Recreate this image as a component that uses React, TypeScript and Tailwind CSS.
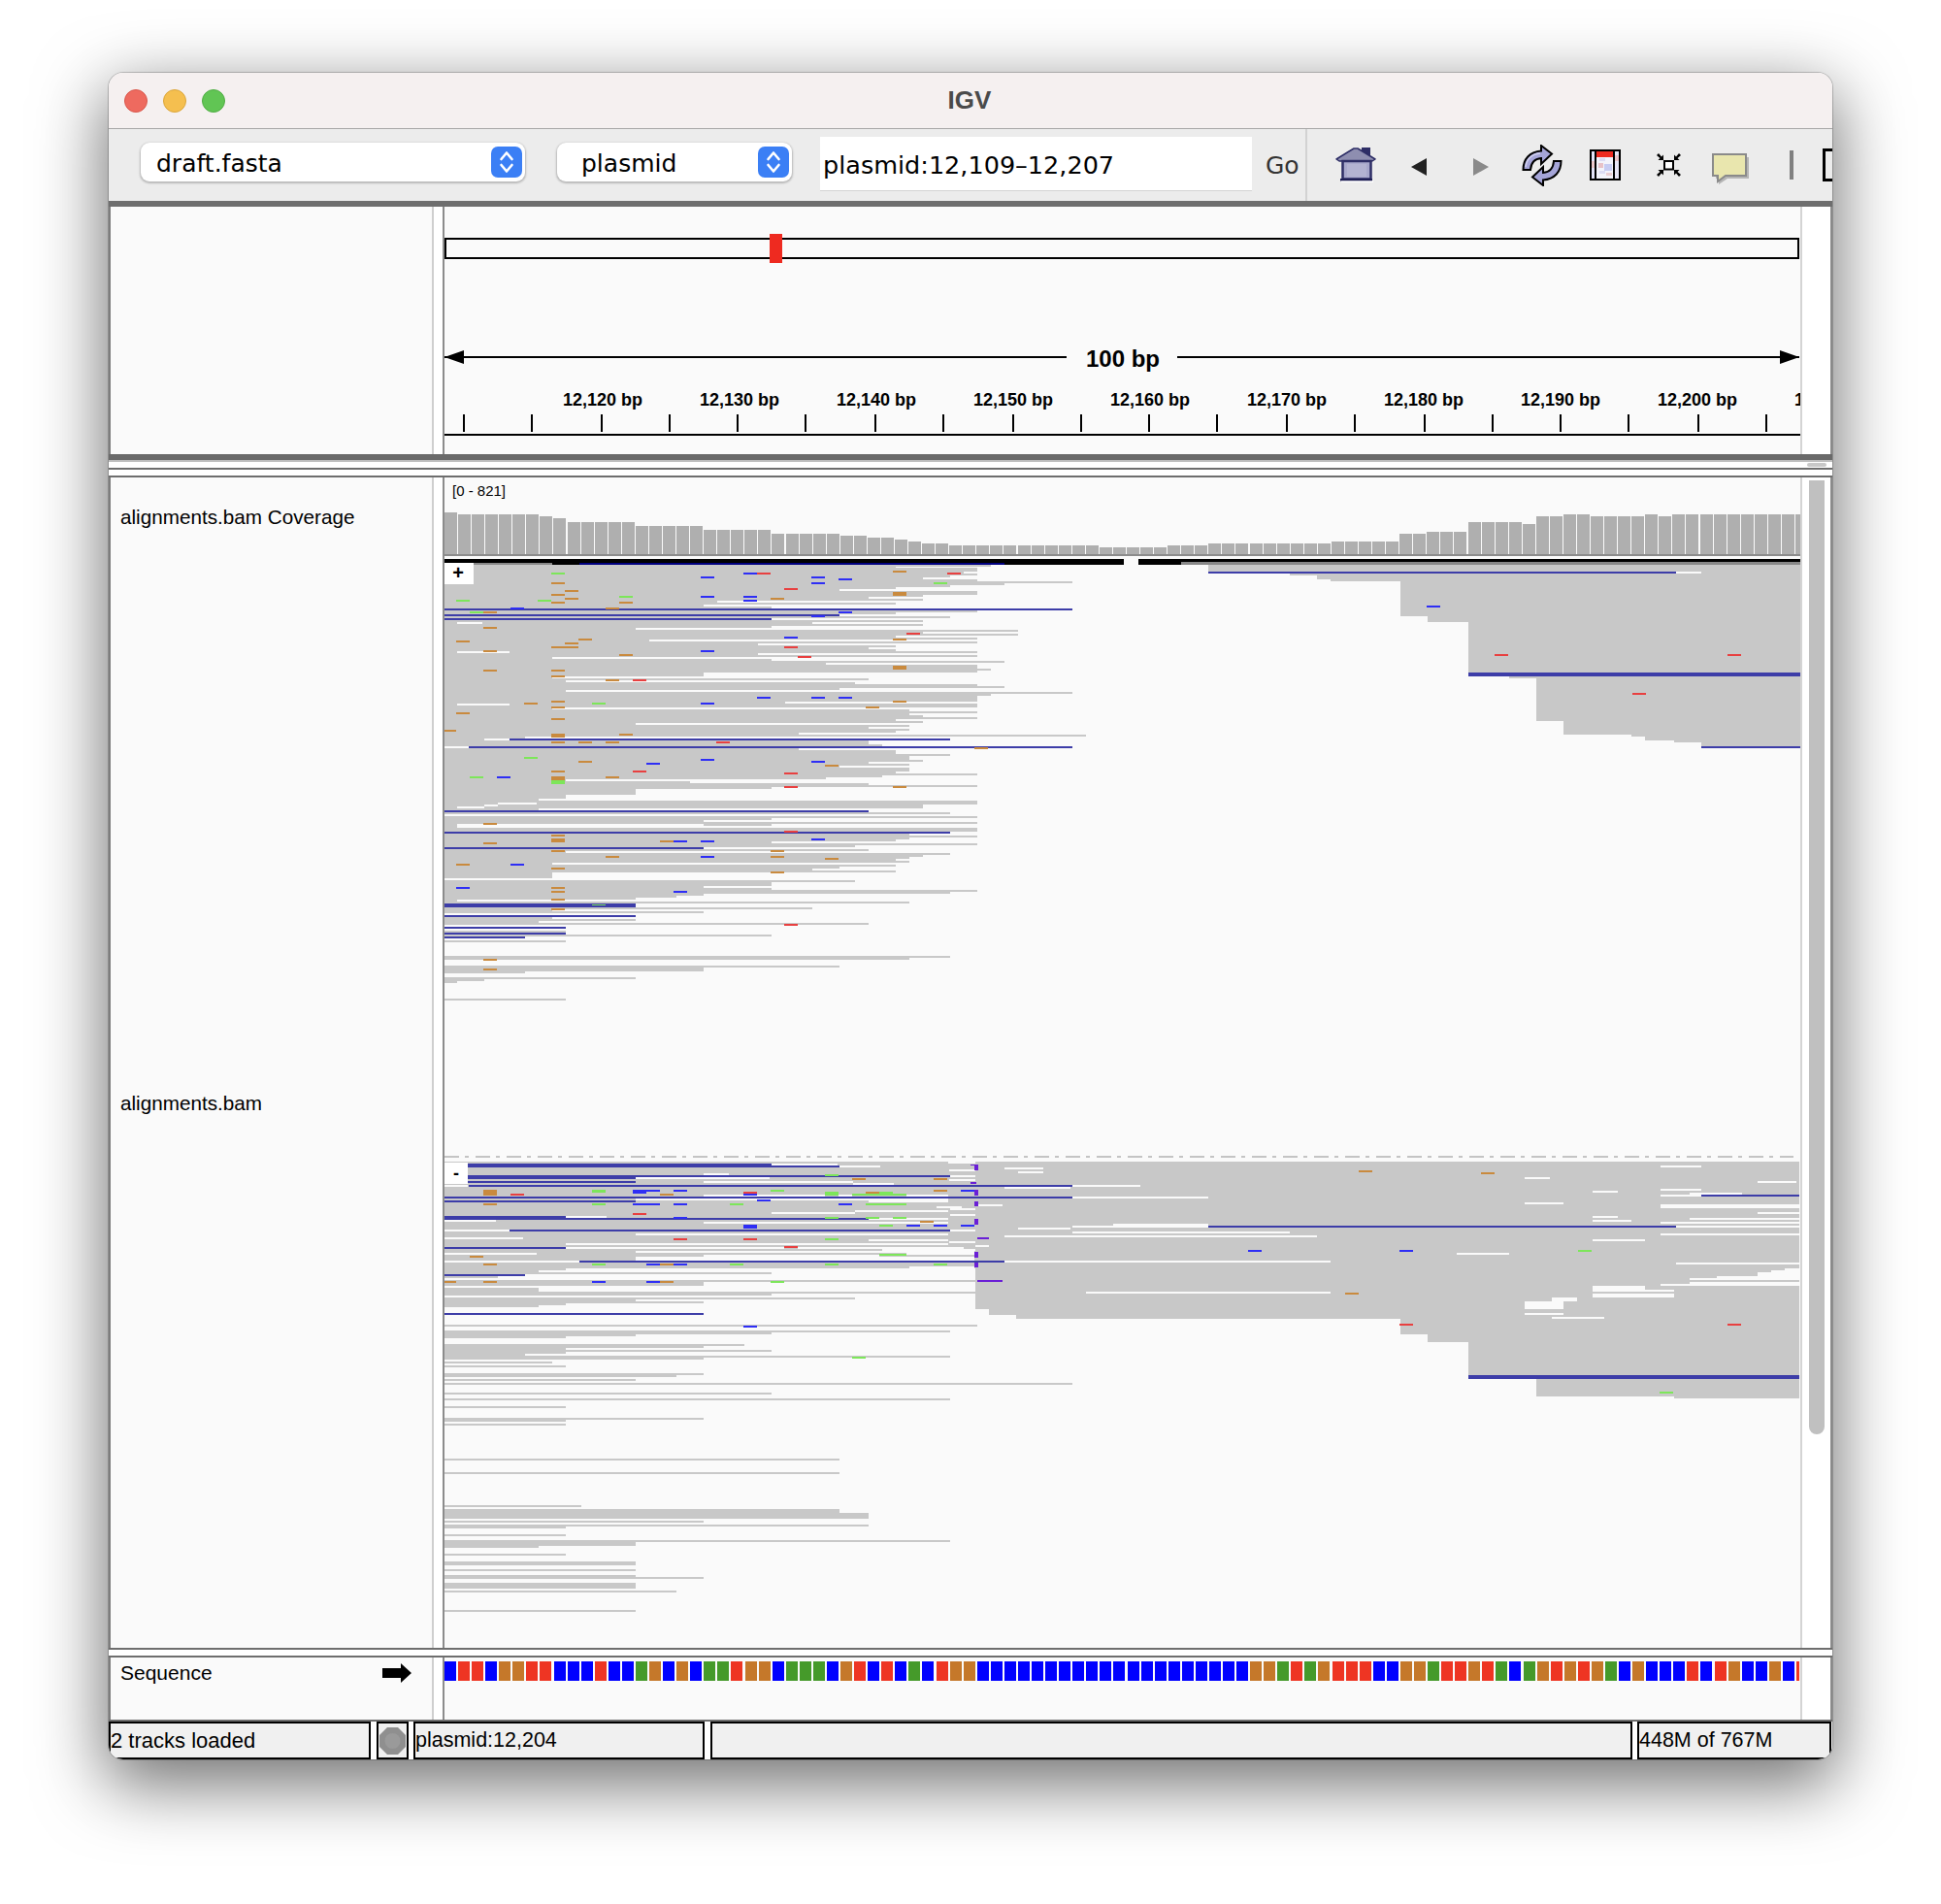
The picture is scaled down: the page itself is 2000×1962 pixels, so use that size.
import React from "react";

const SANS = "font-['Liberation_Sans',Arial,sans-serif]";
const UI = "font-['DejaVu_Sans',sans-serif]";
const GREY = "#c8c8c8", NAVY = "#3d3da8", OR = "#c98a3e", BL = "#2e2ef5", GR = "#7de65a", RD = "#e84040", PU = "#6a1fd6";

type R = { x: number; y: number; w: number; h: number; c: string };
const RIGHT = 1855;
const mk = (fx: (n: number) => number, fy: (n: number) => number) =>
  (x0: number, x1: number, y0: number, y1: number, c: string): R => {
    const x = Math.round(fx(x0)), y = Math.round(fy(y0));
    return { x, y, w: Math.min(Math.round(fx(x1)), RIGHT) - x, h: Math.max(1, Math.round(fy(y1)) - y), c };
  };
const z6 = mk(n => 440 + n / 2.24, n => 570 + n / 3);
const z7 = mk(n => 440 + n / 2.24, n => 1180 + n / 3);
const z8 = mk(n => 1000 + n / 1.742, n => 1180 + n / 3);
const z9 = mk(n => 1200 + n / 2.24, n => 500 + n / 3);

const TOP_ROWS: [number, number][] = [[36,1302],[42,1082],[44,1270],[56,1238],[62,1270],[68,1207],[74,1145],[80,1270],[86,1490],[92,1333],[98,1207],[104,1082],[110,952],[116,1270],[130,1145],[134,1020],[140,1145],[146,670],[152,1082],[158,638],[164,795],[170,638],[176,1270],[182,1082],[188,952],[194,1207],[200,795],[206,1145],[212,889],[218,1145],[224,795],[230,482],[236,1364],[242,1145],[248,1364],[254,1082],[260,1270],[266,513],[272,1270],[278,764],[284,1082],[290,1020],[296,1082],[302,1270],[308,764],[314,1270],[320,289],[326,795],[332,1333],[338,921],[344,1270],[358,1302],[362,1270],[368,638],[380,289],[386,1020],[392,320],[398,988],[404,1270],[412,1333],[416,952],[422,320],[428,1490],[434,1302],[440,1270],[458,827],[464,1270],[476,288],[482,1113],[488,1270],[494,1113],[500,1145],[506,1270],[512,1082],[518,1145],[524,482],[530,1113],[536,1020],[542,1113],[548,1082],[554,858],[560,1521],[566,226],[572,190],[578,1020],[590,1051],[596,96],[602,858],[608,1082],[620,1207],[626,1113],[632,1113],[638,1145],[644,1020],[650,1113],[656,952],[662,1113],[674,1082],[680,1270],[686,1051],[692,921],[698,320],[704,607],[710,1020],[716,1270],[722,795],[728,482],[746,320],[758,258],[764,1270],[776,1145],[788,258],[794,1019],[800,1207],[806,40],[812,1270],[818,795],[824,638],[830,1270],[836,795],[842,69],[848,1270],[860,1207],[866,1113],[872,1270],[878,1113],[884,1082],[890,795],[896,1270],[902,988],[908,638],[914,1020],[920,320],[926,1207],[932,1145],[938,1113],[944,1082],[950,1113],[956,289],[962,1082],[968,952],[974,889],[980,1082],[986,289],[1004,40],[1010,988],[1016,795],[1028,638],[1034,795],[1040,1270],[1046,1207],[1052,638],[1058,576],[1064,482],[1070,69],[1076,1113],[1082,482],[1094,889],[1100,289],[1106,638],[1112,40],[1118,482],[1124,289],[1130,482],[1136,258],[1142,1020],[1148,40],[1154,320],[1160,40],[1166,320],[1172,320],[1178,795],[1184,226],[1190,40],[1196,320],[1202,40],[1245,1207],[1251,1113],[1257,40],[1275,952],[1281,638],[1293,226],[1299,40],[1311,482],[1317,132],[1323,69],[1329,40],[1377,320],[1383,40],[1390,40]];

const BOT_ROWS: [number, number][] = [[381,320],[387,258],[393,795],[399,226],[405,164],[411,40],[417,1266],[423,638],[435,40],[441,258],[453,1266],[459,795],[465,40],[471,988],[477,482],[483,638],[489,320],[495,258],[501,40],[519,638],[525,40],[555,1270],[561,40],[573,1207],[579,795],[585,482],[591,320],[597,40],[615,732],[621,638],[627,320],[633,795],[639,320],[645,226],[651,1207],[657,638],[663,40],[669,289],[675,40],[681,320],[687,40],[705,638],[711,576],[717,40],[723,482],[729,40],[735,1490],[741,40],[765,795],[771,40],[783,1207],[789,40],[807,320],[813,40],[843,638],[849,320],[855,40],[861,320],[867,40],[969,952],[975,40],[1011,952],[1017,40],[1113,356],[1119,40],[1125,952],[1137,1019],[1155,40],[1161,638],[1167,40],[1173,1019],[1179,320],[1185,40],[1203,320],[1209,40],[1221,1207],[1227,482],[1239,258],[1245,40],[1263,320],[1269,40],[1287,482],[1299,40],[1311,482],[1317,40],[1329,482],[1335,638],[1341,40],[1353,482],[1371,40],[1377,576],[1383,40],[1437,482],[1443,40]];

const rows = (list: [number, number][], f: typeof z6) =>
  list.slice(0, -1).map(([y, x], i) => (x > 40 ? f(40, x, y, list[i + 1][0], GREY) : null)).filter(Boolean) as R[];

const W = "#fafafa";
const hole = (f: typeof z6, l: number[][]) => l.map(([a, b, c, d]) => f(a, b, c, d, W));
const band = (f: typeof z6, l: number[][], col: string) => l.map(([a, b, c, d]) => f(a, b, c, d, col));
const marks = (f: typeof z6, l: number[][], col: string, dw = 31) =>
  l.map(([x, y, w = dw, h = 5]) => f(x, x + w, y, y + h, col));

const top6Marks = [
  ...marks(z6, [[287,60],[67,144],[255,144],[444,132],[1169,90],[99,180],[224,630],[381,462],[99,690],[287,702,31,12],[381,1086,31,4]], GR),
  ...marks(z6, [[1075,54],[287,90],[318,114],[287,126],[318,138],[287,150],[444,150],[793,138],[1075,120],[1075,126],[130,180],[130,228],[67,270],[349,264],[318,276],[287,288,62],[1075,264,31,6],[130,300,31,6],[444,312],[130,360],[287,360],[287,378,31,6],[1075,348],[1075,354],[412,390,31,6],[224,462],[287,456],[287,474,31,6],[1075,456],[1012,474,31,6],[67,492],[287,510],[40,546,27],[287,558],[287,564,31,6],[444,558],[287,582],[349,582],[412,582],[1263,600,31,6],[349,642],[918,654],[287,672],[287,690],[287,696],[412,690],[1075,720,31,6],[130,834,31,6],[287,870],[287,882],[287,888],[130,894],[538,888],[287,918],[793,918,31,6],[412,936],[793,936],[918,942],[67,960],[287,972],[793,984,31,6],[287,1032],[287,1044],[287,1068,31,6],[287,1098],[130,1254,31,6],[130,1284],[412,168]], OR),
  ...marks(z6, [[632,72],[730,60],[887,72],[950,78],[887,90],[632,132],[730,132],[730,144,31,6],[193,168],[950,180],[887,192],[824,258],[632,300],[762,444],[887,444],[950,444],[632,462],[632,636],[506,648],[887,642],[161,690],[569,888],[632,888],[887,882],[632,936],[193,960],[67,1032],[569,1044]], BL),
  ...marks(z6, [[762,60],[1201,60],[824,108],[1107,246],[824,288],[856,318,31,6],[475,390,31,6],[668,582],[475,672],[824,678],[824,720,31,6],[824,858],[824,1146,31,6]], RD),
];

const RECTS: R[] = [
  z6(40, 1568, 18, 36, "#000"),
  z6(108, 289, 30, 36, "#888"),
  z6(352, 1333, 30, 36, "#000080"),
  { x: 1140, y: 576, w: 18, h: 6, c: "#000" },
  { x: 1173, y: 576, w: 44, h: 6, c: "#000" },
  { x: 1217, y: 576, w: 638, h: 3, c: "#000" },
  { x: 1217, y: 579, w: 638, h: 3, c: "#888" },
  ...rows(TOP_ROWS, z6),
  ...hole(z6, [[69,128,212,218],[69,190,304,308],[69,190,465,471],[132,190,572,578],[40,96,596,602],[132,164,776,782],[69,132,784,790],[164,253,770,776],[69,638,836,842]]),
  ...band(z6, [[40,1490,170,176],[40,952,188,194],[40,795,200,206],[190,1207,572,578],[96,1490,596,602],[40,1019,794,800],[40,1207,860,866],[40,638,908,914],[40,482,1082,1094],[40,482,1118,1124],[40,320,1154,1160],[40,320,1172,1178],[40,226,1184,1190]], NAVY),
  ...top6Marks,
  ...band(z9, [[101,1469,246,267],[1239,1469,267,273],[289,1469,273,279],[352,1469,279,291],[383,1469,291,297],[544,1469,297,405],[607,1469,405,423],[701,1469,423,579],[795,1469,591,597],[858,1469,597,729],[921,1469,729,771],[1077,1469,771,777],[1109,1469,777,789],[1176,1469,789,795],[1239,1469,795,807]], GREY),
  ...band(z9, [[101,1180,267,273],[701,1469,579,591],[1239,1469,807,813]], NAVY),
  ...marks(z9, [[605,372]], BL),
  ...marks(z9, [[762,522],[1299,522],[1080,642]], RD),
  z7(40, 1266, 51, 381, GREY),
  z8(9, 1488, 51, 507, GREY),
  ...band(z8, [[33,1488,507,525],[82,1488,525,537],[772,1488,537,585],[821,1488,585,609],[894,1488,609,723],[1016,1488,723,777],[1263,1488,777,783]], GREY),
  ...hole(z8, [[61,131,69,75],[85,131,81,87],[183,305,123,129],[61,179,129,135],[183,427,159,165],[14,57,183,189],[85,179,255,261],[183,427,249,255],[256,427,243,249],[183,573,267,273],[61,622,279,285],[9,33,309,315],[61,646,357,363],[207,646,453,459],[995,1040,99,105],[1239,1312,63,69],[1413,1483,111,117],[1239,1312,135,141],[1117,1162,141,147],[1291,1385,147,153],[1239,1312,153,159],[995,1064,177,183],[1239,1488,183,195],[1413,1488,207,213],[1117,1162,219,225],[1291,1488,225,231],[1117,1186,231,237],[1239,1488,237,243],[1267,1488,249,255],[1239,1488,273,279],[1117,1211,291,297],[873,967,333,339],[1267,1488,363,369],[1462,1488,381,387],[1437,1488,387,393],[1413,1488,393,405],[1340,1488,405,411],[1291,1488,411,417],[1291,1488,423,429],[1239,1488,429,435],[1117,1211,435,447],[1117,1263,447,453],[1117,1263,459,471],[1044,1089,471,483],[995,1064,483,507],[995,1064,519,525],[1044,1138,531,537]]),
  ...hole(z7, [[795,948,57,63],[952,1046,63,69],[1203,1266,51,57],[1206,1266,75,81],[638,697,87,93],[482,791,99,105],[1206,1266,93,99],[1206,1266,105,111],[638,983,111,117],[983,1077,117,123],[40,94,123,129],[638,918,153,159],[950,981,153,159],[1107,1203,153,159],[482,1019,165,171],[1019,1203,165,177],[1176,1234,189,195],[1207,1266,195,201],[988,1203,201,207],[795,988,207,213],[1207,1266,213,219],[320,414,219,225],[1019,1203,225,231],[40,159,231,237],[638,1203,237,243],[40,190,261,267],[1207,1266,261,267],[482,1203,273,279],[40,222,285,291],[1019,1203,291,297],[1206,1266,297,303],[320,1203,303,309],[320,824,315,321],[856,1238,315,321],[1051,1266,321,327],[482,1263,327,333],[40,253,333,339],[1107,1263,333,339],[638,1044,339,345],[482,1263,345,357],[40,352,357,363],[1113,1263,375,381]]),
  ...rows(BOT_ROWS, z7),
  ...band(z7, [[94,795,57,63],[94,952,63,69],[94,1207,93,99],[94,482,99,105],[94,482,111,117],[96,1490,123,129],[40,1490,159,165],[40,482,171,177],[40,320,219,225],[40,1019,225,231],[190,1207,261,267],[40,320,315,321],[352,1333,357,363],[40,226,399,405],[40,638,519,525]], NAVY),
  ...band(z8, [[1312,1488,153,159],[427,1267,249,255],[894,1488,711,723]], NAVY),
  ...marks(z7, [[130,138],[130,144],[130,150],[538,150],[981,102],[1169,102],[1169,138],[1012,144],[130,180],[1138,234,31,6],[99,342],[130,366,31,6],[538,366,31,6],[40,420,27],[130,420],[538,420]], OR),
  ...marks(z7, [[918,90],[381,138,31,10],[793,138],[918,144,31,12],[981,150,126],[1044,144],[381,180],[699,180],[1012,180,95],[918,222],[1012,222],[1075,222],[1044,246],[918,288],[1044,336,63],[381,366],[699,366],[918,366],[1169,366],[793,420],[981,654,31,6]], GR),
  ...marks(z7, [[475,138,63],[475,144],[569,138],[1232,138],[730,150,31,6],[762,168,31,6],[475,180,63],[569,180],[950,180],[569,222,31,6],[730,246],[730,252],[1107,246],[1169,246],[1232,246],[506,366,31,6],[569,366,31,6],[381,420],[506,420],[730,558,31,6]], BL),
  ...marks(z7, [[193,150],[730,144],[475,210],[569,288],[730,288],[824,312,31,6]], RD),
  ...marks(z7, [[1254,60,18,4],[1263,60,9,18],[1263,138,9,18],[1263,174,9,16],[1263,228,9,18],[1270,285,28,6],[1263,330,9,18],[1263,362,9,16],[1270,417,58,6],[1254,114,14,5]], PU),
  ...marks(z8, [[697,78,24],[916,84,24],[672,456,24]], OR),
  ...marks(z8, [[498,324,24],[770,324,24]], BL),
  ...marks(z8, [[1091,324,24],[1237,762,24]], GR),
  ...marks(z8, [[770,552,24],[1359,552,24]], RD),
];

const COVER = [43,41,41,41,41,41,41,39,37,33,33,33,33,33,29,29,29,29,29,25,25,25,25,25,21,21,21,21,21,19,19,17,17,15,13,11,11,9,9,9,9,9,9,9,9,9,9,9,7,7,7,7,7,
  9,9,9,11,11,11,11,11,11,11,11,11,13,13,13,13,13,21,21,23,23,23,33,33,33,33,31,39,39,41,41,39,39,39,39,41,39,41,41,41,41,41,41,41,41,41,41];

const SEQ = "BRRBOORRBBBRBBGOBOBGGROOBGGGBORBRBGBROOBBBBBBBBBBBBBBBBBBBBOOGRGORRRBBOOGRRORGBGOROROGBOBBBRBROBBOBR";
const SEQC: Record<string, string> = { B: "#0000ff", R: "#ee3523", G: "#459a2a", O: "#c5782a" };
const TICK = [0, 70, 142, 212, 282, 352];

function Chevrons() {
  return (
    <span className="w-[32px] h-[32px] rounded-[7px] bg-[#3b7ff5] flex items-center justify-center shrink-0">
      <svg width="18" height="26" viewBox="0 0 18 26" fill="none" stroke="#fff" strokeWidth="2.6" strokeLinecap="round" strokeLinejoin="round">
        <path d="M3.5 10 L9 3.5 L14.5 10" />
        <path d="M3.5 16 L9 22.5 L14.5 16" />
      </svg>
    </span>
  );
}

function Select({ label, w, pad }: { label: string; w: string; pad: string }) {
  return (
    <div className={`${w} ${pad} ${UI} h-[40px] -mt-[6px] bg-white rounded-[9px] shadow-[0_1px_2px_1px_rgba(0,0,0,0.22)] flex items-center justify-between pr-[3px] text-[25px] text-black shrink-0`}>
      <span className="pt-[3px]">{label}</span>
      <Chevrons />
    </div>
  );
}

function HomeIcon() {
  return (
    <svg width="42" height="36" viewBox="0 0 42 36" className="ml-[29px] shrink-0">
      <rect x="27" y="0" width="9" height="9" fill="#2e2e66" />
      <path d="M1 12 L14 4 L19 1 L23 1 L41 12 L38 14 H4 Z" fill="#8e8eb0" stroke="#2e2e66" strokeWidth="1.5" strokeLinejoin="round" />
      <rect x="7.5" y="14" width="29" height="18.5" fill="#a8a8cc" stroke="#2e2e66" strokeWidth="2.5" />
      <rect x="12" y="17" width="20" height="13" fill="#b3b3d2" />
      <rect x="5" y="32" width="33" height="2.5" fill="#1e1e55" />
      <rect x="6" y="34.5" width="33" height="1.5" fill="#fff" />
    </svg>
  );
}

function RefreshIcon() {
  const arrow = "M1.5 26 C1.5 15 8 7.5 20 6.5 L20 1 L31 9.5 L20 20 L20 14 C13.5 14.5 9.5 19 9 26 Z";
  return (
    <svg width="42" height="43" viewBox="0 0 42 43" className="ml-[34px] shrink-0">
      <path d={arrow} fill="#a5a5d8" stroke="#000" strokeWidth="2" strokeLinejoin="miter" />
      <path d={arrow} transform="rotate(180 21 21.5)" fill="#a5a5d8" stroke="#000" strokeWidth="2" strokeLinejoin="miter" />
      <path d="M4 23 C5 15 10 10 19 9" fill="none" stroke="#d2d2f0" strokeWidth="1.5" />
    </svg>
  );
}

function RegionIcon() {
  return (
    <svg width="32" height="32" viewBox="0 0 32 32" className="ml-[28px] shrink-0" shapeRendering="crispEdges">
      <rect x="1" y="1" width="30" height="30" fill="#fff" stroke="#000" strokeWidth="2" />
      <rect x="2" y="2" width="5" height="28" fill="#e3e3f7" />
      <rect x="2" y="12" width="5" height="7" fill="#ecc9cc" />
      <rect x="26" y="2" width="4" height="28" fill="#e7e5f6" />
      <rect x="26" y="6" width="4" height="6" fill="#e9c6cb" />
      <rect x="7" y="8" width="18" height="22" fill="#f3f3fb" />
      <rect x="7" y="2" width="18" height="6" fill="#ee2a20" />
      <rect x="10" y="9" width="6" height="3" fill="#dcdcf4" />
      <rect x="9" y="14" width="5" height="5" fill="#e8c2c8" />
      <rect x="15" y="15" width="8" height="7" fill="#c7ccf3" />
      <rect x="10" y="22" width="6" height="3" fill="#dcdcf4" />
      <rect x="17" y="24" width="6" height="3" fill="#e9cdd2" />
      <path d="M6 1 V31 M25 1 V31" stroke="#000" strokeWidth="2" fill="none" />
    </svg>
  );
}

function FitIcon() {
  const c = "M8 8 L8 2.5 L6 4.5 L3 1 L1 3 L4.5 6 L2.5 8 Z";
  return (
    <svg width="27" height="26" viewBox="0 0 27 26" className="ml-[36px] shrink-0">
      <rect x="9" y="9" width="9" height="8.5" fill="#fff" stroke="#000" strokeWidth="2" />
      <path d={c} fill="#000" />
      <path d={c} fill="#000" transform="translate(27 0) scale(-1 1)" />
      <path d={c} fill="#000" transform="translate(0 26) scale(1 -1)" />
      <path d={c} fill="#000" transform="translate(27 26) scale(-1 -1)" />
    </svg>
  );
}

function CommentIcon() {
  return (
    <svg width="38" height="32" viewBox="0 0 38 32" className="ml-[31px] mt-[8px] shrink-0">
      <path d="M4 4 H38 V26 H16 L7 32 V26 H4 Z" fill="#b5b5b5" />
      <path d="M1 1 H35 V23 H14 L6 29 V23 H1 Z" fill="#e9e6ae" stroke="#8a8a8a" strokeWidth="2" />
    </svg>
  );
}

function Toolbar() {
  return (
    <div className="h-[74px] bg-[#ececec] flex items-center shrink-0 overflow-hidden">
      <div className="ml-[33px]"><Select label="draft.fasta" w="w-[396px]" pad="pl-[16px]" /></div>
      <div className="ml-[33px]"><Select label="plasmid" w="w-[242px]" pad="pl-[25px]" /></div>
      <div className={`${UI} ml-[29px] w-[445px] h-[56px] -mt-[2px] bg-white border-b border-[#d4d4d4] flex items-center pl-[3px] pt-[4px] text-[25.5px] text-black shrink-0 whitespace-nowrap`}>
        plasmid:12,109–12,207
      </div>
      <span className={`${UI} ml-[14px] w-[34px] text-[25px] text-[#333] pt-[2px] shrink-0`}>Go</span>
      <div className="ml-[7px] w-[2px] h-[74px] bg-[#d2d2d2] shrink-0" />
      <HomeIcon />
      <svg width="16" height="18" viewBox="0 0 16 18" className="ml-[36px] mt-[3px] shrink-0"><path d="M16 0 V18 L0 9 Z" fill="#222" /></svg>
      <svg width="16" height="18" viewBox="0 0 16 18" className="ml-[48px] mt-[3px] shrink-0"><path d="M0 0 V18 L16 9 Z" fill="#8a8a8a" /></svg>
      <RefreshIcon />
      <RegionIcon />
      <FitIcon />
      <CommentIcon />
      <div className="ml-[42px] w-[4px] h-[30px] bg-[#808080] shrink-0" />
      <div className="ml-[30px] w-[14px] h-[34px] border-[3px] border-r-0 border-black shrink-0 flex items-center justify-end">
        <span className="w-[3px] h-[2px] bg-black" />
      </div>
    </div>
  );
}

function RowShell({ h, name, main, side }: { h: string; name?: React.ReactNode; main: React.ReactNode; side?: React.ReactNode }) {
  return (
    <div className={`${h} flex shrink-0 bg-[#fafafa] border-l-2 border-r-2 border-l-[#7d7d7d] border-r-[#8a8a8a]`}>
      <div className={`w-[331px] shrink-0 pl-[10px] ${SANS} text-black`}>{name}</div>
      <div className="w-[13px] shrink-0 bg-white border-l-2 border-l-[#cfcfcf] border-r-2 border-r-[#8c8c8c]" />
      <div className="w-[1397px] shrink-0 relative overflow-hidden">{main}</div>
      <div className="flex-1 bg-white border-l-2 border-l-[#d4d4d4]">{side}</div>
    </div>
  );
}

function Header() {
  const labels = ["12,120 bp","12,130 bp","12,140 bp","12,150 bp","12,160 bp","12,170 bp","12,180 bp","12,190 bp","12,200 bp","12,210 bp"];
  return (
    <svg width="1397" height="255" viewBox="458 213 1397 255" className="block">
      <rect x="459" y="246" width="1394" height="20" fill="#fafafa" stroke="#000" strokeWidth="2" />
      <rect x="793" y="241" width="13" height="30" fill="#ee2a20" />
      <path d="M458 368 H1099 M1213 368 H1854" stroke="#000" strokeWidth="2" />
      <path d="M458 368 L478 361 V375 Z M1854 368 L1834 361 V375 Z" fill="#000" />
      <text x="1157" y="378" textAnchor="middle" fontFamily="Liberation Sans" fontWeight="700" fontSize="24" fill="#000">100 bp</text>
      {labels.map((t, i) => (
        <text key={t} x={621 + 141 * i} y="418" textAnchor="middle" fontFamily="Liberation Sans" fontWeight="700" fontSize="18" fill="#000">{t}</text>
      ))}
      {Array.from({ length: 20 }, (_, i) => (
        <rect key={i} x={477 + 424 * Math.floor(i / 6) + TICK[i % 6]} y="427" width="2" height="18" fill="#000" />
      ))}
      <rect x="458" y="447" width="1397" height="2" fill="#000" />
    </svg>
  );
}

function Pileup() {
  return (
    <svg width="1397" height="1206" viewBox="458 492 1397 1206" className="block" shapeRendering="crispEdges">
      <text x="466" y="511" fontFamily="Liberation Sans" fontSize="15" fill="#000" shapeRendering="auto">[0 - 821]</text>
      {COVER.map((h, i) => (
        <rect key={i} x={Math.round(458 + 14.06 * i)} y={571 - h} width="13" height={h} fill="#afafaf" />
      ))}
      <rect x="458" y="571" width="1397" height="2" fill="#8c8c8c" />
      {RECTS.map((r, i) => (
        <rect key={i} x={r.x} y={r.y} width={r.w} height={r.h} fill={r.c} />
      ))}
      <rect x="458" y="580" width="30" height="22" fill="#fff" />
      <text x="472" y="597" textAnchor="middle" fontFamily="Liberation Sans" fontWeight="700" fontSize="20" fill="#000" shapeRendering="auto">+</text>
      <rect x="458" y="1198" width="24" height="22" fill="#fff" />
      <text x="470" y="1215" textAnchor="middle" fontFamily="Liberation Sans" fontWeight="700" fontSize="18" fill="#000" shapeRendering="auto">-</text>
      <line x1="458" x2="1848" y1="1192" y2="1192" stroke="#c4c4c4" strokeWidth="2" strokeDasharray="15 5.5 4.5 7" />
    </svg>
  );
}

function SequenceTrack() {
  return (
    <svg width="1397" height="64" viewBox="458 1708 1397 64" className="block" shapeRendering="crispEdges">
      {SEQ.split("").map((c, i) => (
        <rect key={i} x={Math.round(458 + 14.07 * i)} y="1712" width={i === 99 ? 3 : 12} height="20" fill={SEQC[c]} />
      ))}
    </svg>
  );
}

function Cell({ w, ml, size, children }: { w: string; ml?: string; size?: string; children?: React.ReactNode }) {
  return (
    <div className={`${w} ${ml ?? ""} ${size ?? "text-[21.5px]"} ${SANS} h-full bg-[#f0f0f0] border-2 border-black flex items-center leading-none text-black whitespace-nowrap shrink-0 overflow-hidden`}>
      {children}
    </div>
  );
}

export default function App() {
  return (
    <div className="w-[2000px] h-[1962px] bg-white pt-[75px] pl-[112px] overflow-hidden">
      <div className="w-[1776px] h-[1738px] rounded-[15px] overflow-hidden flex flex-col bg-white shadow-[0_22px_70px_4px_rgba(0,0,0,0.56),0_0_0_1px_rgba(0,0,0,0.2)]">
        <div className="h-[58px] shrink-0 bg-[#f5f0f0] border-b border-[#a8a8a8] flex items-center pl-[16px] relative">
          <div className="flex gap-[16px]">
            <span className="w-[24px] h-[24px] rounded-full bg-[#ee6a5f] border border-[#d9574c]" />
            <span className="w-[24px] h-[24px] rounded-full bg-[#f5bf4f] border border-[#dba63b]" />
            <span className="w-[24px] h-[24px] rounded-full bg-[#61c554] border border-[#50ad44]" />
          </div>
          <span className={`${SANS} absolute left-0 right-[2px] text-center font-bold text-[26px] text-[#4a4a4a]`}>IGV</span>
        </div>
        <Toolbar />
        <div className="h-[6px] shrink-0 bg-[#6e6e6e]" />
        <RowShell h="h-[255px]" main={<Header />} />
        <div className="h-[6px] shrink-0 bg-[#6a6a6a]" />
        <div className="h-[2px] shrink-0 bg-[#bdbdbd]" />
        <div className="h-[6px] shrink-0 bg-white flex justify-end pr-[6px]">
          <span className="w-[20px] h-[4px] mt-[1px] rounded-full bg-[#c8c8c8]" />
        </div>
        <div className="h-[2px] shrink-0 bg-[#6e6e6e]" />
        <div className="h-[6px] shrink-0 bg-white" />
        <div className="h-[2px] shrink-0 bg-[#6e6e6e]" />
        <RowShell
          h="h-[1206px]"
          name={
            <div className="text-[20.7px] leading-none">
              <div className="pt-[31px]">alignments.bam Coverage</div>
              <div className="pt-[583px]">alignments.bam</div>
            </div>
          }
          main={<Pileup />}
          side={<div className="ml-[7px] mt-[3px] w-[16px] h-[983px] rounded-b-full rounded-t-[8px] bg-[#c0c0c0]" />}
        />
        <div className="h-[2px] shrink-0 bg-[#6e6e6e]" />
        <div className="h-[6px] shrink-0 bg-white" />
        <div className="h-[2px] shrink-0 bg-[#6e6e6e]" />
        <RowShell
          h="h-[64px]"
          name={
            <div className="flex items-center justify-between pr-[21px] pt-[5px] text-[21px] leading-none">
              <span>Sequence</span>
              <svg width="30" height="20" viewBox="0 0 30 20"><path d="M0 5 H19 V0 L30 10 L19 20 V15 H0 Z" fill="#000" /></svg>
            </div>
          }
          main={<SequenceTrack />}
        />
        <div className="h-[2px] shrink-0 bg-[#6e6e6e]" />
        <div className="h-[39px] shrink-0 bg-white flex">
          <Cell w="w-[270px]" size="text-[22px]"><span>2 tracks loaded</span></Cell>
          <Cell w="w-[33px]" ml="ml-[6px]">
            <svg width="27" height="28" viewBox="0 0 27 28" className="shrink-0 mx-auto">
              <path d="M8 0 H19 L27 8 V20 L19 28 H8 L0 20 V8 Z" fill="#8f8f8f" />
              <circle cx="13.5" cy="14" r="8" fill="#9a9a9a" />
            </svg>
          </Cell>
          <Cell w="w-[300px]" ml="ml-[5px]"><span>plasmid:12,204</span></Cell>
          <Cell w="w-[950px]" ml="ml-[6px]" />
          <Cell w="w-[200px]" ml="ml-[5px]"><span>448M of 767M</span></Cell>
        </div>
      </div>
    </div>
  );
}
